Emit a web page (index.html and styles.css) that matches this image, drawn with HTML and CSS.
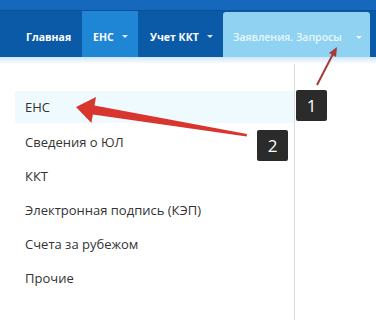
FILE: index.html
```
<!DOCTYPE html>
<html>
<head>
  <title>Заявления. Запросы</title>
  <link rel="stylesheet" href="styles.css">
</head>
<body>
  <div class="topline"></div>
  <nav class="nav">
    <a class="nav-item nav-home">Главная</a>
    <a class="nav-item nav-active">ЕНС <span class="caret"></span></a>
    <a class="nav-item nav-kkt">Учет ККТ <span class="caret"></span></a>
    <a class="nav-item nav-open">Заявления. Запросы <span class="caret"></span></a>
  </nav>
  <div class="nav-shadow"></div>

  <div class="dropdown">
    <ul class="menu">
      <li class="menu-item menu-hover">ЕНС</li>
      <li class="menu-item">Сведения о ЮЛ</li>
      <li class="menu-item">ККТ</li>
      <li class="menu-item">Электронная подпись (КЭП)</li>
      <li class="menu-item">Счета за рубежом</li>
      <li class="menu-item">Прочие</li>
    </ul>
  </div>

  <!-- annotation arrows drawn over the page -->
  <svg class="marks" width="376" height="320" viewBox="0 0 376 320">
    <line x1="317" y1="85" x2="333" y2="54" stroke="#a93a3a" stroke-width="2"/>
    <polygon points="337,47 329,53 336,57" fill="#a93a3a"/>
    <polygon points="76,107 96,97 94.5,105.5 247,134 246.6,136.4 92.9,114.5 91.4,123" fill="#d8352e"/>
  </svg>
  <div class="badge badge-1">1</div>
  <div class="badge badge-2">2</div>
</body>
</html>
```

FILE: styles.css
```
body {
  margin: 0;
  font-family: "Open Sans", Arial, sans-serif;
  background: #fff;
  width: 376px;
  height: 320px;
  overflow: hidden;
  position: relative;
}
.topline {
  height: 10px;
  background: #1568bb;
  border-bottom: 1px solid #0a4f98;
}
.nav {
  display: flex;
  align-items: stretch;
  height: 46px;
  padding-left: 15px;
  background: #0b5aa7;
}
.nav-item {
  display: flex;
  align-items: center;
  box-sizing: border-box;
  padding: 5px 0 0 11px;
  color: #fff;
  font-size: 10.5px;
  font-weight: 700;
  white-space: nowrap;
}
.nav-home {
  width: 67px;
}
.nav-active {
  width: 56px;
  background: #1e86d4;
}
.nav-kkt {
  width: 85px;
  padding-left: 12px;
}
.nav-open {
  width: 147px;
  background: #8fd2f2;
  color: #eaf7fd;
  font-weight: 600;
  border-radius: 3px 3px 0 0;
  padding-left: 10px;
  margin-top: 1px;
}
.caret {
  display: inline-block;
  width: 0;
  height: 0;
  margin-left: 8px;
  border-left: 3px solid transparent;
  border-right: 3px solid transparent;
  border-top: 3px solid rgba(255,255,255,0.85);
}
.nav-open .caret {
  margin-left: 14px;
}
.nav-shadow {
  height: 7px;
  background: linear-gradient(#cfe6f6, #fff);
}
.dropdown {
  margin-left: 15px;
  width: 279px;
  height: 270px;
  border-right: 1px solid #dcdcdc;
}
.menu {
  list-style: none;
  margin: 0;
  padding: 27px 0 0;
}
.menu-item {
  height: 34px;
  line-height: 34px;
  padding-left: 10px;
  font-size: 13px;
  color: #333;
}
.menu-hover {
  background: #eefafd;
  height: 32px;
  line-height: 32px;
  margin-bottom: 2px;
}
.marks {
  position: absolute;
  left: 0;
  top: 0;
}
.badge {
  position: absolute;
  width: 31px;
  height: 31px;
  line-height: 31px;
  text-align: center;
  background: #2b2b2b;
  color: #fff;
  font-size: 17px;
  border-radius: 2px;
}
.badge-1 {
  left: 296px;
  top: 90px;
}
.badge-2 {
  left: 257px;
  top: 130px;
}
```
